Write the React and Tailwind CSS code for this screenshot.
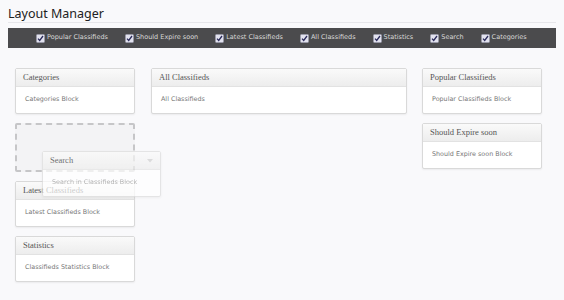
import React from 'react';

const toolbarItems = [
    'Popular Classifieds',
    'Should Expire soon',
    'Latest Classifieds',
    'All Classifieds',
    'Statistics',
    'Search',
    'Categories',
];

const CheckMark = () => (
    <svg width="9" height="9" viewBox="0 0 9 9" className="shrink-0">
        <rect x="0.5" y="0.5" width="8" height="8" rx="1" fill="#e2e2ee" stroke="#9a9aa8" />
        <path d="M2 4.6 L3.7 6.4 L7 2" fill="none" stroke="#2a2a5a" strokeWidth="1.3" />
    </svg>
);

const Panel = ({ title, body }) => (
    <div className="bg-white border border-[#d9d9d9] rounded-[2px] shadow-[0_1px_2px_rgba(0,0,0,0.06)]">
        <div className="h-[18px] flex items-center px-[7px] border-b border-[#e2e2e2] bg-gradient-to-b from-[#fafafa] to-[#ededed] font-['Liberation_Serif',serif] text-[8.5px] text-[#555]">
            {title}
        </div>
        <div className="h-[26px] flex items-center px-[9px] font-['DejaVu_Sans',sans-serif] text-[6.4px] text-[#777]">
            {body}
        </div>
    </div>
);

export default function App() {
    return (
        <div className="relative min-h-[300px] bg-[#f9f9fb] px-2">
            <div className="h-[23px] border-b border-[#e6e6ea] flex items-end pb-[2px]">
                <h1 className="font-['Noto_Sans',sans-serif] text-[12.5px] leading-none text-[#222]">Layout Manager</h1>
            </div>

            <div className="mt-[5px] h-[20px] bg-[#4b4b4d] flex items-center pl-[28px] gap-[17px] font-['DejaVu_Sans',sans-serif] text-[6.5px] text-[#d8d8d8]">
                {toolbarItems.map((item) => (
                    <div key={item} className="flex items-center gap-[2px]">
                        <CheckMark />
                        <span>{item}</span>
                    </div>
                ))}
            </div>

            <div className="flex items-start mt-[20px] pl-[7px]">
                <div className="w-[120px] flex flex-col gap-[9px]">
                    <Panel title="Categories" body="Categories Block" />
                    <div className="h-[49px] border-2 border-dashed border-[#c6c6c8] rounded-[2px] bg-[#f3f3f5]" />
                    <Panel title="Latest Classifieds" body="Latest Classifieds Block" />
                    <Panel title="Statistics" body="Classifieds Statistics Block" />
                </div>
                <div className="w-[256px] ml-[16px]">
                    <Panel title="All Classifieds" body="All Classifieds" />
                </div>
                <div className="w-[120px] ml-[15px] flex flex-col gap-[9px]">
                    <Panel title="Popular Classifieds" body="Popular Classifieds Block" />
                    <Panel title="Should Expire soon" body="Should Expire soon Block" />
                </div>
            </div>

            {/* block being dragged */}
            <div className="absolute left-[42px] top-[151px] w-[119px] opacity-70 bg-white border border-[#dcdcdc] rounded-[2px] shadow-[0_1px_3px_rgba(0,0,0,0.08)]">
                <div className="h-[18px] flex items-center justify-between px-[7px] border-b border-[#e2e2e2] bg-gradient-to-b from-[#fafafa] to-[#ededed] font-['Liberation_Serif',serif] text-[8.5px] text-[#333]">
                    <span>Search</span>
                    <svg width="6" height="4" viewBox="0 0 6 4"><path d="M0 0 L6 0 L3 3.5 Z" fill="#cfcfcf" /></svg>
                </div>
                <div className="h-[26px] flex items-center px-[9px] font-['DejaVu_Sans',sans-serif] text-[6.4px] text-[#999]">
                    Search in Classifieds Block
                </div>
            </div>
        </div>
    );
}
